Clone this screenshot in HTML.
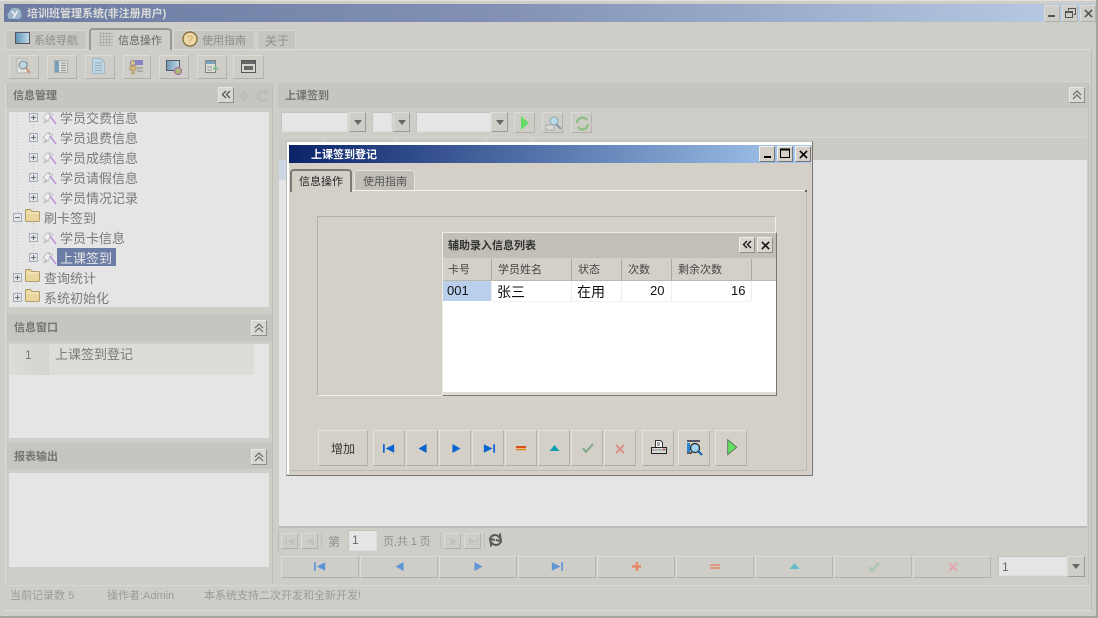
<!DOCTYPE html>
<html><head><meta charset="utf-8"><style>
html,body{margin:0;padding:0;background:#cecdc8}
#r{position:relative;width:1098px;height:618px;overflow:hidden;background:#cecdc8;font:11px "Liberation Sans","WenQuanYi Zen Hei","Noto Sans CJK SC",sans-serif;color:#7d7d7a}
#r div,#r svg,#r span{position:absolute;box-sizing:border-box}
.t{white-space:nowrap;line-height:16px}
.b{background:#cecdc8;border:1px solid;border-color:#dcdbd7 #b4b3ae #b0afaa #dcdbd7}
.d{background:#d4d0c8;border:1px solid;border-color:#e6e3dd #b5b2aa #aeaba3 #e6e3dd}
.w{background:#d4d0c8;border:1px solid;border-color:#f4f2ee #777 #777 #f4f2ee;color:#000}
.g{background:#d8d5ce;border:1px solid;border-color:#f0eee9 #8f8e8a #8f8e8a #f0eee9}
.h{background:#c6c5c0}
.p{background:#e5e5e5}
.c{background:#e5e5e5;border:1px solid;border-color:#c4c3be #dedddb #dedddb #c4c3be}
.a{background:#cecdc8;border:1px solid;border-color:#dedcd8 #9c9b97 #9c9b97 #dedcd8}
.a:after{content:"";position:absolute;left:4px;top:7px;border:4px solid transparent;border-top:5px solid #666;border-bottom:0}
.tree{color:#7a7a78;font-size:13px}
.col{color:#444;font-size:11px}
.n{opacity:.85}
</style></head><body>
<div id="r">
<svg width="0" height="0" style="position:absolute"><defs>
<linearGradient id="gb"><stop offset="0" stop-color="#5d93b5"/><stop offset="1" stop-color="#c4dbe8"/></linearGradient>
<symbol id="pl" viewBox="0 0 9 9"><rect x=".5" y=".5" width="8" height="8" fill="#e4e6ea" stroke="#a4acb8"/><path d="M2 4.500h5M4.500 2v5" stroke="#6a6e74"/></symbol>
<symbol id="mi" viewBox="0 0 9 9"><rect x=".5" y=".5" width="8" height="8" fill="#e4e6ea" stroke="#a4acb8"/><path d="M2 4.500h5" stroke="#6a6e74"/></symbol>
<symbol id="wd" viewBox="0 0 15 15"><path d="M1 7l4-5 4 2-3 6z" fill="#efefed" stroke="#c0c0be"/><path d="M2 12l3-3" stroke="#bcbcba" stroke-width="2"/><path d="M8 5l6 8" stroke="#b284dc" stroke-width="1.300"/><path d="M7 1l1 2M11 3l-1 1" stroke="#aaa"/></symbol>
<symbol id="fo" viewBox="0 0 15 13"><path d="M.5 3V1.500Q.5.500 1.500.500h4l1.500 2h6.500q1 0 1 1v8q0 1-1 1h-12q-1 0-1-1z" fill="#e9d69c" stroke="#b09f6c"/><path d="M1.500 4h12" stroke="#f8eecb"/></symbol>
<symbol id="ff" viewBox="0 0 14 10"><path d="M1 0v10" stroke="currentColor" stroke-width="2"/><path d="M13 0v10L3 5z" fill="currentColor"/></symbol>
<symbol id="pr" viewBox="0 0 9 10"><path d="M9 0v10L0 5z" fill="currentColor"/></symbol>
<symbol id="nx" viewBox="0 0 9 10"><path d="M0 0v10l9-5z" fill="currentColor"/></symbol>
<symbol id="ll" viewBox="0 0 14 10"><path d="M13 0v10" stroke="currentColor" stroke-width="2"/><path d="M1 0v10l10-5z" fill="currentColor"/></symbol>
<symbol id="ok" viewBox="0 0 12 10"><path d="M1 5l3 4 7-8" fill="none" stroke="currentColor" stroke-width="2"/></symbol>
<symbol id="xx" viewBox="0 0 10 10"><path d="M1 1l8 8M9 1l-8 8" fill="none" stroke="currentColor" stroke-width="1.800"/></symbol>
<symbol id="up" viewBox="0 0 10 6"><path d="M0 6L5 0l5 6z" fill="currentColor"/></symbol>
<symbol id="dc" viewBox="0 0 10 10"><path d="M5 1L1.500 4.500 5 8M9 1L5.500 4.500 9 8" fill="none" stroke="#555" stroke-width="1.300"/></symbol>
<symbol id="du" viewBox="0 0 10 10"><path d="M1 5l4-4 4 4M1 9l4-4 4 4" fill="none" stroke="#666" stroke-width="1.200"/></symbol>
</defs></svg>

<!-- window frame -->
<div style="left:0;top:0;width:1098px;height:1px;background:#e0dfdb"></div>
<div style="left:1096px;top:0;width:2px;height:618px;background:#a4a39f"></div>
<div style="left:0;top:616px;width:1098px;height:2px;background:#a4a39f"></div>
<div style="left:4px;top:4px;width:1090px;height:18px;background:linear-gradient(90deg,#6c7ba2,#8190b4 45%,#b9cde5)"></div>
<svg style="left:6px;top:6px" width="17" height="15" viewBox="0 0 17 15"><path d="M3 13Q0 9 3 6Q5 1 10 2Q15 2 15 7Q17 11 13 13z" fill="#9db7cc"/><path d="M6 5l2.500 4M11.500 5l-4 7" stroke="#f0f0ee" stroke-width="1.600" fill="none"/></svg>
<div class="t" style="left:27px;top:6px;font-weight:bold;color:#dcdcd8">培训班管理系统(非注册用户)</div>
<div class="b" style="left:1044px;top:5px;width:16px;height:17px"><svg style="left:3px;top:9px" width="8" height="3"><rect width="7" height="2" fill="#555"/></svg></div>
<div class="b" style="left:1062px;top:5px;width:16px;height:17px"><svg style="left:2px;top:2px" width="11" height="11"><path d="M3.500 2.500v-2h7v6h-2M.500 3.500h7v6h-7zM.500 4.500h7" fill="none" stroke="#555"/></svg></div>
<div class="b" style="left:1080px;top:5px;width:16px;height:17px"><svg style="left:3px;top:3px;color:#555" width="9" height="9"><use href="#xx"/></svg></div>

<!-- main tabs -->
<div style="left:4px;top:49px;width:1088px;height:1px;background:#dedcd8"></div>
<div style="left:1091px;top:49px;width:1px;height:562px;background:#bcbbb6"></div>
<div style="left:1088px;top:84px;width:1px;height:500px;background:#c0bfba"></div>
<div style="left:4px;top:610px;width:1088px;height:1px;background:#dedcd8"></div>
<div style="left:5px;top:30px;width:82px;height:19px;background:#c6c5c0;border:1px solid #d8d7d3;border-bottom:0;border-radius:3px 3px 0 0"></div>
<div style="left:89px;top:28px;width:83px;height:22px;background:#cecdc8;border:2px solid #999894;border-bottom:0;border-radius:4px 4px 0 0"></div>
<div style="left:173px;top:30px;width:82px;height:19px;background:#c6c5c0;border:1px solid #d8d7d3;border-bottom:0;border-radius:3px 3px 0 0"></div>
<div style="left:257px;top:30px;width:39px;height:19px;background:#c6c5c0;border:1px solid #d8d7d3;border-bottom:0;border-radius:3px 3px 0 0"></div>
<svg style="left:15px;top:32px" width="15" height="13"><rect x=".5" y=".5" width="14" height="11" fill="url(#gb)" stroke="#556"/></svg>
<div class="t" style="left:34px;top:33px;color:#8d8d8a">系统导航</div>
<svg style="left:99px;top:32px" width="14" height="14"><path d="M0 1.500h14M0 4.500h14M0 7.500h14M0 10.500h14M0 13.500h14M1.500 0v14M4.500 0v14M7.500 0v14M10.500 0v14" stroke="#b0b0ae"/></svg>
<div class="t" style="left:118px;top:33px;color:#666">信息操作</div>
<svg style="left:182px;top:31px" width="16" height="16"><circle cx="8" cy="8" r="7" fill="#eed9a6" stroke="#8a7440" stroke-width="1.400"/><text x="5" y="12" font-size="11" fill="#c8ac60" font-family="Liberation Sans">?</text></svg>
<div class="t" style="left:202px;top:33px;color:#8d8d8a">使用指南</div>
<div class="t" style="left:265px;top:33px;color:#8d8d8a;font-size:12px">关于</div>

<!-- toolbar -->
<div class="b" style="left:9px;top:55px;width:30px;height:24px"></div>
<div class="b" style="left:47px;top:55px;width:30px;height:24px"></div>
<div class="b" style="left:85px;top:55px;width:30px;height:24px"></div>
<div class="b" style="left:123px;top:55px;width:28px;height:24px"></div>
<div class="b" style="left:159px;top:55px;width:30px;height:24px"></div>
<div class="b" style="left:197px;top:55px;width:30px;height:24px"></div>
<div class="b" style="left:233px;top:55px;width:31px;height:24px"></div>
<svg class="n" style="left:15px;top:58px" width="16" height="17"><rect x="2" y="1" width="10" height="14" fill="#e9e9e7" stroke="#b0b0ae"/><circle cx="8" cy="7" r="4" fill="#bcd8e6" stroke="#6a7a88"/><path d="M11 10l4 5" stroke="#d08a66" stroke-width="2"/></svg>
<svg class="n" style="left:54px;top:60px" width="14" height="13"><rect x=".5" y=".5" width="13" height="12" fill="#dfdfdc" stroke="#aaa"/><rect x="1" y="1" width="4" height="11" fill="#6c9ab8"/><path d="M7 3h5M7 5.500h5M7 8h5M7 10.500h5" stroke="#888"/></svg>
<svg class="n" style="left:92px;top:58px" width="13" height="16"><path d="M.5.500h8l4 4v11H.500z" fill="#bcd8ea" stroke="#96b6ca"/><path d="M3 5h7M3 7.500h7M3 10h7M3 12.500h7" stroke="#8dacc2"/></svg>
<svg class="n" style="left:129px;top:59px" width="15" height="16"><circle cx="4" cy="4" r="2.500" fill="#e2c58e" stroke="#777"/><path d="M1 7h6v4H5v4H3v-4H1z" fill="#d8b36e" stroke="#98793f" stroke-width=".6"/><rect x="6" y="1" width="8" height="5" fill="#7f78c2"/><path d="M8 9h6M8 12h6" stroke="#777"/></svg>
<svg class="n" style="left:166px;top:60px" width="16" height="15"><rect x=".5" y=".5" width="13" height="10" fill="url(#gb)" stroke="#445"/><circle cx="12" cy="11" r="3.500" fill="#a8b868" stroke="#a050a8"/></svg>
<svg class="n" style="left:205px;top:60px" width="14" height="14"><rect x=".5" y=".5" width="10" height="12" fill="#e0e0dd" stroke="#777"/><rect x="1" y="1" width="9" height="3" fill="#6c9ab8"/><path d="M2 7h5M2 10h5" stroke="#888"/><path d="M8 8.500h5M10.500 6v5" stroke="#6cb078" stroke-width="1.500"/></svg>
<svg class="n" style="left:241px;top:60px" width="15" height="13"><rect x=".5" y=".5" width="14" height="12" fill="#d8d8d5" stroke="#444"/><rect x="1" y="1" width="13" height="3" fill="#555"/><rect x="3" y="6" width="9" height="4" fill="#555"/></svg>

<!-- left panel -->
<div style="left:5px;top:84px;width:1px;height:500px;background:#dcdbd7"></div>
<div style="left:272px;top:84px;width:1px;height:500px;background:#bcbbb6"></div>
<div class="h" style="left:6px;top:83px;width:266px;height:25px"></div>
<div class="t" style="left:13px;top:88px;font-weight:bold;color:#747472">信息管理</div>
<div class="b" style="left:218px;top:87px;width:16px;height:16px;background:#d8d7d3;border-color:#e8e7e3 #8f8e8a #8f8e8a #e8e7e3"><svg style="left:2px;top:2px" width="10" height="10"><use href="#dc"/></svg></div>
<svg style="left:238px;top:90px" width="12" height="12"><path d="M6 1v10M1 6h10" stroke="#bcbbb6" stroke-width="3"/></svg>
<svg style="left:256px;top:90px" width="12" height="13"><path d="M10 4a4.500 4.500 0 1 0 .5 4" fill="none" stroke="#bcbbb6" stroke-width="2.500"/><path d="M7 0l5 1-1 5z" fill="#bcbbb6"/></svg>
<div class="p" style="left:9px;top:112px;width:260px;height:195px"></div>
<svg style="left:9px;top:112px" width="60" height="195"><path d="M8.500 0v186M24.500 0v146" stroke="#c4c4c2" stroke-dasharray="1 2"/></svg>
<svg style="left:29px;top:113px" width="9" height="9"><use href="#pl"/></svg><svg style="left:42px;top:111px" width="15" height="15"><use href="#wd"/></svg><div class="t tree" style="left:60px;top:111px">学员交费信息</div>
<svg style="left:29px;top:133px" width="9" height="9"><use href="#pl"/></svg><svg style="left:42px;top:131px" width="15" height="15"><use href="#wd"/></svg><div class="t tree" style="left:60px;top:131px">学员退费信息</div>
<svg style="left:29px;top:153px" width="9" height="9"><use href="#pl"/></svg><svg style="left:42px;top:151px" width="15" height="15"><use href="#wd"/></svg><div class="t tree" style="left:60px;top:151px">学员成绩信息</div>
<svg style="left:29px;top:173px" width="9" height="9"><use href="#pl"/></svg><svg style="left:42px;top:171px" width="15" height="15"><use href="#wd"/></svg><div class="t tree" style="left:60px;top:171px">学员请假信息</div>
<svg style="left:29px;top:193px" width="9" height="9"><use href="#pl"/></svg><svg style="left:42px;top:191px" width="15" height="15"><use href="#wd"/></svg><div class="t tree" style="left:60px;top:191px">学员情况记录</div>
<svg style="left:13px;top:213px" width="9" height="9"><use href="#mi"/></svg><svg style="left:25px;top:209px" width="15" height="13"><use href="#fo"/></svg><div class="t tree" style="left:44px;top:211px">刷卡签到</div>
<svg style="left:29px;top:233px" width="9" height="9"><use href="#pl"/></svg><svg style="left:42px;top:231px" width="15" height="15"><use href="#wd"/></svg><div class="t tree" style="left:60px;top:231px">学员卡信息</div>
<svg style="left:29px;top:253px" width="9" height="9"><use href="#pl"/></svg><svg style="left:42px;top:251px" width="15" height="15"><use href="#wd"/></svg>
<div style="left:57px;top:248px;width:59px;height:18px;background:#6b7ca6"></div><div class="t tree" style="left:60px;top:251px;color:#e6e6e4">上课签到</div>
<svg style="left:13px;top:273px" width="9" height="9"><use href="#pl"/></svg><svg style="left:25px;top:269px" width="15" height="13"><use href="#fo"/></svg><div class="t tree" style="left:44px;top:271px">查询统计</div>
<svg style="left:13px;top:293px" width="9" height="9"><use href="#pl"/></svg><svg style="left:25px;top:289px" width="15" height="13"><use href="#fo"/></svg><div class="t tree" style="left:44px;top:291px">系统初始化</div>

<div class="h" style="left:7px;top:314px;width:265px;height:27px"></div>
<div class="t" style="left:14px;top:320px;font-weight:bold;color:#747472">信息窗口</div>
<div class="b" style="left:251px;top:320px;width:16px;height:16px;background:#d8d7d3;border-color:#e8e7e3 #8f8e8a #8f8e8a #e8e7e3"><svg style="left:2px;top:2px" width="10" height="10"><use href="#du"/></svg></div>
<div class="p" style="left:9px;top:344px;width:260px;height:94px"></div>
<div style="left:9px;top:344px;width:245px;height:31px;background:#dcdcd8"></div>
<div style="left:9px;top:344px;width:40px;height:31px;background:linear-gradient(90deg,#dcdcd8,#d4d3cf)"></div>
<div class="t" style="left:25px;top:347px;color:#7a7a78;font-size:12px">1</div>
<div class="t tree" style="left:55px;top:347px">上课签到登记</div>

<div class="h" style="left:7px;top:443px;width:265px;height:26px"></div>
<div class="t" style="left:14px;top:449px;font-weight:bold;color:#747472">报表输出</div>
<div class="b" style="left:251px;top:449px;width:16px;height:16px;background:#d8d7d3;border-color:#e8e7e3 #8f8e8a #8f8e8a #e8e7e3"><svg style="left:2px;top:2px" width="10" height="10"><use href="#du"/></svg></div>
<div class="p" style="left:9px;top:473px;width:260px;height:94px"></div>

<div style="left:5px;top:585px;width:1086px;height:1px;background:#d8d7d3"></div>
<div class="t" style="left:10px;top:588px;color:#9a9a97">当前记录数 5</div>
<div class="t" style="left:107px;top:588px;color:#9a9a97">操作者:Admin</div>
<div class="t" style="left:204px;top:588px;color:#9a9a97">本系统支持二次开发和全新开发!</div>

<!-- right panel -->
<div class="h" style="left:278px;top:83px;width:810px;height:25px"></div>
<div class="t" style="left:285px;top:88px;font-weight:bold;color:#747472">上课签到</div>
<div class="b" style="left:1069px;top:87px;width:16px;height:16px;background:#d8d7d3;border-color:#e8e7e3 #8f8e8a #8f8e8a #e8e7e3"><svg style="left:2px;top:2px" width="10" height="10"><use href="#du"/></svg></div>

<div class="c" style="left:281px;top:112px;width:67px;height:20px"></div><div class="a" style="left:349px;top:112px;width:17px;height:20px"></div>
<div class="c" style="left:372px;top:112px;width:20px;height:20px"></div><div class="a" style="left:393px;top:112px;width:17px;height:20px"></div>
<div class="c" style="left:416px;top:112px;width:75px;height:20px"></div><div class="a" style="left:491px;top:112px;width:17px;height:20px"></div>
<div class="b" style="left:514px;top:112px;width:21px;height:21px"><svg style="left:5px;top:3px" width="10" height="14"><path d="M1 0v14l8-7z" fill="#66dc66"/></svg></div>
<div class="b" style="left:542px;top:112px;width:21px;height:21px"><svg style="left:2px;top:2px" width="17" height="17"><circle cx="9" cy="6" r="4" fill="#b8dcec" stroke="#8aa"/><path d="M11 9l5 5" stroke="#8b9aa8" stroke-width="2"/><rect x="1" y="10" width="8" height="5" fill="#dcdcd8" stroke="#aaa"/></svg></div>
<div class="b" style="left:571px;top:112px;width:21px;height:21px"><svg style="left:3px;top:3px" width="15" height="15"><path d="M2 7a5.500 5.500 0 0 1 10-3M13 8a5.500 5.500 0 0 1-10 3" fill="none" stroke="#8fc08a" stroke-width="2.500"/></svg></div>

<div class="p" style="left:279px;top:160px;width:808px;height:366px"></div>
<div style="left:279px;top:137px;width:808px;height:23px;background:#cbcac5;border-top:1px solid #d6d5d1"></div>
<div style="left:279px;top:160px;width:10px;height:20px;background:#ccd6e4"></div>
<div style="left:279px;top:526px;width:808px;height:2px;background:#bcbbb6"></div>
<div style="left:323px;top:137px;width:1px;height:8px;background:#dad9d5"></div>
<div style="left:395px;top:137px;width:1px;height:8px;background:#dad9d5"></div>
<div style="left:486px;top:137px;width:1px;height:8px;background:#dad9d5"></div>
<div style="left:531px;top:137px;width:1px;height:8px;background:#dad9d5"></div>

<!-- pager -->
<div style="left:278px;top:530px;width:1px;height:23px;background:#bcbbb6"></div>
<div class="b" style="left:281px;top:533px;width:17px;height:16px"><svg style="left:3px;top:2px;color:#c2c1bc" width="10" height="11"><use href="#ff"/></svg></div>
<div class="b" style="left:301px;top:533px;width:17px;height:16px"><svg style="left:4px;top:2px;color:#c2c1bc" width="8" height="11"><use href="#pr"/></svg></div>
<div style="left:321px;top:533px;width:1px;height:16px;background:#c0bfba"></div>
<div class="t" style="left:328px;top:534px;color:#8f8f8c;font-size:12px">第</div>
<div class="c" style="left:348px;top:530px;width:29px;height:21px"></div>
<div class="t" style="left:352px;top:532px;color:#6a6a68;font-size:12px">1</div>
<div class="t" style="left:383px;top:534px;color:#8f8f8c;letter-spacing:-.1px">页,共 1 页</div>
<div style="left:440px;top:533px;width:1px;height:16px;background:#c0bfba"></div>
<div class="b" style="left:444px;top:533px;width:17px;height:16px"><svg style="left:5px;top:2px;color:#c2c1bc" width="8" height="11"><use href="#nx"/></svg></div>
<div class="b" style="left:464px;top:533px;width:17px;height:16px"><svg style="left:3px;top:2px;color:#c2c1bc" width="10" height="11"><use href="#ll"/></svg></div>
<div style="left:484px;top:533px;width:1px;height:16px;background:#c0bfba"></div>
<svg style="left:488px;top:533px" width="15" height="14"><path d="M2 7a5 5 0 0 1 9-3l1-2 1 6-5-1M13 7a5 5 0 0 1-9 3l-1 2-1-6 5 1" fill="none" stroke="#5a5a58" stroke-width="2"/></svg>

<!-- nav row -->
<div class="b" style="left:281px;top:556px;width:78px;height:22px"><svg style="left:32px;top:5px;color:#5f97d6" width="12" height="9"><use href="#ff"/></svg></div>
<div class="b" style="left:360px;top:556px;width:78px;height:22px"><svg style="left:34px;top:5px;color:#5f97d6" width="9" height="9"><use href="#pr"/></svg></div>
<div class="b" style="left:439px;top:556px;width:78px;height:22px"><svg style="left:34px;top:5px;color:#5f97d6" width="9" height="9"><use href="#nx"/></svg></div>
<div class="b" style="left:518px;top:556px;width:78px;height:22px"><svg style="left:32px;top:5px;color:#5f97d6" width="12" height="9"><use href="#ll"/></svg></div>
<div class="b" style="left:597px;top:556px;width:78px;height:22px"><svg style="left:34px;top:5px" width="10" height="10"><path d="M5 0v9M0 4.500h9" stroke="#e58a68" stroke-width="2.500"/></svg></div>
<div class="b" style="left:676px;top:556px;width:78px;height:22px"><svg style="left:33px;top:7px" width="11" height="5"><path d="M0 1h10M0 4h10" stroke="#e58a68" stroke-width="1.500"/></svg></div>
<div class="b" style="left:755px;top:556px;width:78px;height:22px"><svg style="left:33px;top:6px;color:#66bcca" width="11" height="6"><use href="#up"/></svg></div>
<div class="b" style="left:834px;top:556px;width:78px;height:22px"><svg style="left:33px;top:5px;color:#a9c4ac" width="12" height="10"><use href="#ok"/></svg></div>
<div class="b" style="left:913px;top:556px;width:78px;height:22px"><svg style="left:34px;top:5px;color:#e0a8a4" width="10" height="10"><use href="#xx"/></svg></div>
<div class="c" style="left:998px;top:556px;width:69px;height:20px"></div>
<div class="t" style="left:1002px;top:559px;color:#666;font-size:12px">1</div>
<div class="a" style="left:1067px;top:556px;width:18px;height:21px"></div>

<!-- dialog -->
<div style="left:286px;top:141px;width:527px;height:335px;background:#d4d0c8;border:1px solid;border-color:#c0bfba #777 #777 #c0bfba"></div>
<div style="left:287px;top:142px;width:525px;height:3px;background:#fff"></div>
<div style="left:287px;top:142px;width:2px;height:332px;background:#fff"></div>
<div style="left:289px;top:145px;width:522px;height:18px;background:linear-gradient(90deg,#0a246a,#a6caf0)"></div>
<div class="t" style="left:311px;top:147px;color:#fff;font-weight:bold">上课签到登记</div>
<div class="w" style="left:759px;top:146px;width:16px;height:16px"><svg style="left:4px;top:9px" width="7" height="3"><rect width="7" height="2" fill="#000"/></svg></div>
<div class="w" style="left:777px;top:146px;width:16px;height:16px"><svg style="left:2px;top:1px" width="11" height="11"><path d="M.5 1.500h9v8h-9z" fill="none" stroke="#000"/><path d="M0 1.500h10" stroke="#000" stroke-width="2"/></svg></div>
<div class="w" style="left:795px;top:146px;width:16px;height:16px"><svg style="left:3px;top:3px;color:#000" width="9" height="9"><use href="#xx"/></svg></div>

<div style="left:354px;top:170px;width:61px;height:20px;background:#c2bfb7;border:1px solid #e6e3dd;border-bottom:0;border-radius:3px 3px 0 0"></div>
<div class="t" style="left:363px;top:174px;color:#555">使用指南</div>
<div style="left:290px;top:190px;width:516px;height:1px;background:#f4f2ee"></div>
<div style="left:806px;top:190px;width:1px;height:281px;background:#bcb9b1"></div>
<div style="left:290px;top:470px;width:517px;height:1px;background:#bcb9b1"></div>
<div style="left:290px;top:169px;width:62px;height:23px;background:#d4d0c8;border:2px solid #7c7a76;border-bottom:0;border-radius:4px 4px 0 0"></div>
<div class="t" style="left:299px;top:174px;color:#222">信息操作</div>
<div style="left:805px;top:190px;width:2px;height:2px;background:#666"></div>

<div style="left:317px;top:216px;width:459px;height:180px;border:1px solid;border-color:#b4b1a9 #f0eee9 #f0eee9 #b4b1a9"></div>
<div style="left:442px;top:232px;width:335px;height:164px;background:#d4d0c8;border:1px solid;border-color:#eeece7 #777 #777 #eeece7"></div>
<div style="left:443px;top:233px;width:333px;height:25px;background:#c2bfb7"></div>
<div class="t" style="left:448px;top:238px;font-weight:bold;color:#333">辅助录入信息列表</div>
<div class="g" style="left:739px;top:237px;width:16px;height:16px"><svg style="left:2px;top:2px" width="10" height="10"><path d="M5 1L1.500 4.500 5 8M9 1L5.500 4.500 9 8" fill="none" stroke="#111" stroke-width="1.300"/></svg></div>
<div class="g" style="left:757px;top:237px;width:16px;height:16px"><svg style="left:3px;top:3px;color:#111" width="9" height="9"><use href="#xx"/></svg></div>
<div style="left:443px;top:259px;width:333px;height:22px;background:#d4d0c8"></div>
<div style="left:443px;top:281px;width:333px;height:111px;background:#fff"></div>
<div style="left:443px;top:392px;width:333px;height:3px;background:#dedcd6"></div>
<div style="left:443px;top:281px;width:49px;height:20px;background:#b9cfec"></div>
<div style="left:491px;top:259px;width:1px;height:22px;background:#aaa79f"></div>
<div style="left:571px;top:259px;width:1px;height:22px;background:#aaa79f"></div>
<div style="left:621px;top:259px;width:1px;height:22px;background:#aaa79f"></div>
<div style="left:671px;top:259px;width:1px;height:22px;background:#aaa79f"></div>
<div style="left:751px;top:259px;width:1px;height:22px;background:#aaa79f"></div>
<div style="left:443px;top:280px;width:333px;height:1px;background:#bab7af"></div>
<div style="left:571px;top:281px;width:1px;height:20px;background:#ececea"></div>
<div style="left:621px;top:281px;width:1px;height:20px;background:#ececea"></div>
<div style="left:671px;top:281px;width:1px;height:20px;background:#ececea"></div>
<div style="left:751px;top:281px;width:1px;height:20px;background:#ececea"></div>
<div style="left:491px;top:281px;width:1px;height:20px;background:#ececea"></div>
<div style="left:492px;top:301px;width:259px;height:1px;background:#f2f2f0"></div>
<div class="t col" style="left:448px;top:262px">卡号</div>
<div class="t col" style="left:498px;top:262px">学员姓名</div>
<div class="t col" style="left:578px;top:262px">状态</div>
<div class="t col" style="left:628px;top:262px">次数</div>
<div class="t col" style="left:678px;top:262px">剩余次数</div>
<div class="t" style="left:447px;top:283px;color:#111;font-size:13px">001</div>
<div class="t" style="left:497px;top:284px;color:#111;font-size:14px">张三</div>
<div class="t" style="left:577px;top:284px;color:#111;font-size:14px">在用</div>
<div class="t" style="left:650px;top:283px;color:#111;font-size:13px">20</div>
<div class="t" style="left:731px;top:283px;color:#111;font-size:13px">16</div>

<div class="d" style="left:318px;top:430px;width:50px;height:36px"></div>
<div class="t" style="left:331px;top:441px;color:#333;font-size:12px">增加</div>
<div class="d" style="left:373px;top:430px;width:32px;height:36px"><svg style="left:9px;top:13px;color:#0a64d0" width="12" height="9"><use href="#ff"/></svg></div>
<div class="d" style="left:406px;top:430px;width:32px;height:36px"><svg style="left:11px;top:13px;color:#0a64d0" width="9" height="9"><use href="#pr"/></svg></div>
<div class="d" style="left:439px;top:430px;width:32px;height:36px"><svg style="left:12px;top:13px;color:#0a64d0" width="9" height="9"><use href="#nx"/></svg></div>
<div class="d" style="left:472px;top:430px;width:32px;height:36px"><svg style="left:10px;top:13px;color:#0a64d0" width="12" height="9"><use href="#ll"/></svg></div>
<div class="d" style="left:505px;top:430px;width:32px;height:36px"><svg style="left:10px;top:15px" width="11" height="5"><path d="M0 1h10" stroke="#d85018" stroke-width="2"/><path d="M0 3.500h10" stroke="#e88010" stroke-width="1.500"/></svg></div>
<div class="d" style="left:538px;top:430px;width:32px;height:36px"><svg style="left:10px;top:14px;color:#10a0b0" width="11" height="6"><use href="#up"/></svg></div>
<div class="d" style="left:571px;top:430px;width:32px;height:36px"><svg style="left:10px;top:12px;color:#7ea88a" width="12" height="10"><use href="#ok"/></svg></div>
<div class="d" style="left:604px;top:430px;width:32px;height:36px"><svg style="left:10px;top:13px;color:#e08880" width="10" height="10"><use href="#xx"/></svg></div>
<div class="d" style="left:642px;top:430px;width:32px;height:36px"><svg style="left:8px;top:9px" width="16" height="15"><path d="M4.500 7V.5h5l2 2V7" fill="#fff" stroke="#333"/><path d="M.5 7.500h15v6H.500z" fill="#ddd" stroke="#222"/><path d="M1 10h14" stroke="#888"/><rect x="12" y="8.500" width="2" height="1" fill="#d44"/><path d="M6 3h3M6 5h3" stroke="#555"/></svg></div>
<div class="d" style="left:678px;top:430px;width:32px;height:36px"><svg style="left:7px;top:9px" width="17" height="17"><path d="M1 1h13" stroke="#556" stroke-width="2"/><rect x="1" y="3" width="3" height="9" fill="#2a86d8"/><path d="M1 13h5" stroke="#333" stroke-width="1.500"/><circle cx="9" cy="8" r="4.500" fill="#9fd4f6" stroke="#222" stroke-width="1.200"/><path d="M12 11l4 4" stroke="#0a64b0" stroke-width="2"/></svg></div>
<div class="d" style="left:715px;top:430px;width:32px;height:36px"><svg style="left:11px;top:8px" width="11" height="17"><path d="M.7.700v15l9-7.500z" fill="#62e062" stroke="#5a7a5a"/></svg></div>
</div>
</body></html>
